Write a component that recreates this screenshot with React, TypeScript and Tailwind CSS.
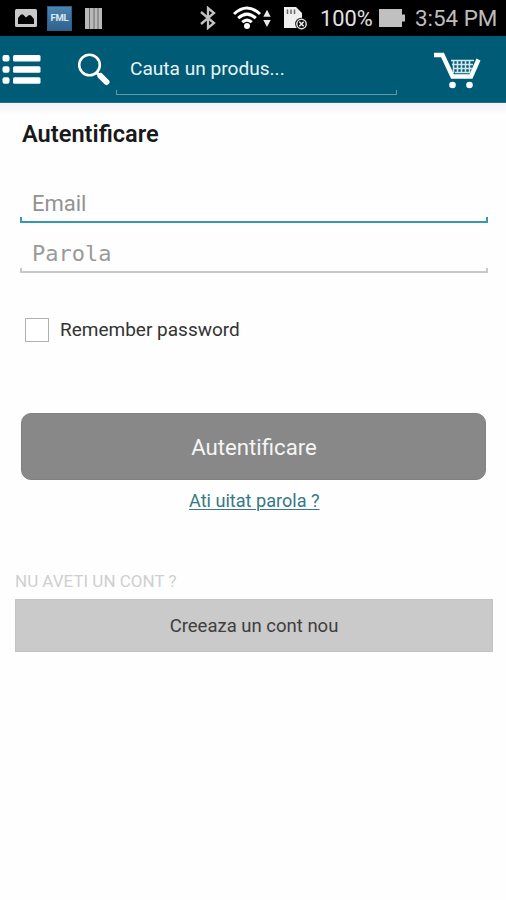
function StatusBar() {
  return (
    <div className="flex h-9 items-center bg-black pl-[15px] text-[22px] leading-9 text-[#bdbdbd]">
      <svg width="22" height="18" viewBox="0 0 22 18">
        <rect width="22" height="18" rx="1.5" fill="#c9c9c9" />
        <path d="M3 15V9L6 5.500H8L11 8.500L14 6L16 6.500L19 10V15Z" fill="#050505" />
      </svg>
      <div className="ml-[10px] flex h-[25px] w-[25px] items-center justify-center border border-[#2b618d] bg-linear-to-b from-[#4c83b1] to-[#2e638f] text-[9.500px] font-bold leading-none tracking-[-0.2px] text-[#dce9f3]">
        FML
      </div>
      <svg className="ml-[13px]" width="17" height="21" viewBox="0 0 17 21">
        <rect width="17" height="21" fill="#b9b9b9" />
        <path d="M4.5 0V21M9 0V21M13 0V21" stroke="#686868" strokeWidth="1" />
      </svg>
      <svg className="ml-[98px]" width="16" height="24" viewBox="0 0 16 24" fill="none" stroke="#c2c2c2" strokeWidth="2.3">
        <path d="M1 6L14 17L8 22V2L14 7L1 18" />
      </svg>
      <svg className="ml-[17px]" width="40" height="24" viewBox="0 0 40 24">
        <g fill="none" stroke="#fff" strokeWidth="3">
          <path d="M1 8Q14 -4 27 8" />
          <path d="M5.2 12.2Q14 4 22.8 12.2" />
          <path d="M9.2 16.2Q14 12 18.8 16.2" />
        </g>
        <circle cx="14" cy="20" r="3" fill="#fff" />
        <path d="M30.3 10.8L34 3.8L37.7 10.8ZM30.3 14L34 21L37.7 14Z" fill="#e8e8e8" />
      </svg>
      <svg className="ml-[10px]" width="25" height="24" viewBox="0 0 25 24">
        <path d="M1 1H13L19 7V22H1Z" fill="#efefef" />
        <path d="M4.500 3.500V8M8 3.500V8M11.500 3.500V8" stroke="#666" strokeWidth="1.5" />
        <circle cx="18.500" cy="18" r="6.3" fill="#080808" />
        <circle cx="18.500" cy="18" r="4.7" fill="none" stroke="#dedede" strokeWidth="1.5" />
        <path d="M16.300 15.8L20.700 20.2M20.700 15.8L16.300 20.2" stroke="#eee" strokeWidth="1.6" />
      </svg>
      <span className="ml-[12px] w-[58px] whitespace-nowrap pt-px text-[21.800px] text-[#e2e2e2]">100%</span>
      <svg width="28" height="20" viewBox="0 0 28 20">
        <path d="M1 1H24V6.500H27V13.500H24V19H1Z" fill="#c0c0c0" />
      </svg>
      <span className="ml-[9px] whitespace-nowrap text-[22.400px]">3:54 PM</span>
    </div>
  );
}

function Header() {
  return (
    <header className="flex h-[67px] items-start border-b border-[#23687c] bg-[#005b76]">
      <svg className="mt-[18px] ml-[2px]" width="39" height="31" viewBox="0 0 39 31" fill="#fff">
        <rect x="0.500" y="1" width="7" height="6.500" rx="2" />
        <rect x="11" y="1" width="27.500" height="6.500" rx="1.500" />
        <rect x="0.500" y="12.200" width="7" height="6.500" rx="2" />
        <rect x="11" y="12.200" width="27.500" height="6.500" rx="1.500" />
        <rect x="0.500" y="23.300" width="7" height="6.500" rx="2" />
        <rect x="11" y="23.300" width="27.500" height="6.500" rx="1.500" />
      </svg>
      <svg className="mt-[16px] ml-[37px]" width="33" height="34" viewBox="0 0 33 34" fill="none" stroke="#fff">
        <circle cx="11.500" cy="13" r="10.300" strokeWidth="2.600" />
        <path d="M18.500 20.500L22 24" strokeWidth="3" />
        <path d="M22.500 24L28.500 30" strokeWidth="6" strokeLinecap="round" />
      </svg>
      <div className="ml-[5px] flex h-[59px] w-[281px] flex-col justify-between">
        <span className="pt-[19px] pl-[14px] text-[19.100px] leading-7 text-[#e9f3f5]">Cauta un produs...</span>
        <span className="h-[5px] border border-t-0 border-[#5a9bae]" />
      </div>
      <svg className="mt-[15px] ml-[37px]" width="50" height="39" viewBox="0 0 50 39">
        <path d="M17 9.500H40M18 13.500H39M19 17.500H38M21 21.500H36M19.500 9V22M23.500 9V22M27.500 9V22M31.500 9V22M35.500 9V22" stroke="#d2e6eb" strokeWidth="1.600" fill="none" />
        <path d="M0 4H8.500L18.500 25.500H37L44.500 8.500" fill="none" stroke="#fff" strokeWidth="4.400" />
        <circle cx="18.500" cy="34" r="3.300" fill="#fff" />
        <circle cx="35.500" cy="34" r="3.300" fill="#fff" />
      </svg>
    </header>
  );
}

export default function App() {
  return (
    <div className="h-[900px] w-[506px] overflow-hidden bg-[#fefefe] font-[Roboto,sans-serif]">
      <StatusBar />
      <Header />
      <main className="h-[797px] bg-linear-to-b from-[#f3f3f8] to-[#fefefe] to-[12px]">
        <form className="flex flex-col px-[20px]">
          <h1 className="mt-[16px] ml-[2px] h-[30px] text-[23.600px] font-semibold leading-[30px] text-[#191919]">Autentificare</h1>
          <div className="mt-[40px] h-[28px] pl-[12px] text-[22px] leading-[30px] text-[#929292]">Email</div>
          <div className="h-[6px] w-[468px] border-2 border-t-0 border-[#359aa9]" />
          <div className="mt-[16px] h-[29px] pl-[12px] font-['DejaVu_Sans_Mono',monospace] text-[22px] leading-[30px] text-[#9a9a9a]">Parola</div>
          <div className="h-[5px] w-[468px] border-2 border-t-0 border-[#c8c8c8]" />
          <label className="mt-[45px] flex h-[24px] items-center pl-[5px] text-[19px] leading-6 text-[#333]">
            <span className="mr-[11px] h-[24px] w-[24px] border-[1.500px] border-[#b0b0b0] bg-white" />
            <span>Remember password</span>
          </label>
          <button type="button" className="mt-[71px] ml-[1px] h-[67px] w-[465px] rounded-[10px] border border-[#808080] bg-[#888] pl-px text-[22.200px] leading-8 text-[#f5f5f5]">Autentificare</button>
          <a className="mt-[7px] ml-[169px] h-[28px] self-start whitespace-nowrap text-[18.100px] leading-7 text-[#347984] underline decoration-1 underline-offset-2">Ati uitat parola ?</a>
        </form>
        <section className="ml-[15px] pt-[54px]">
          <h2 className="h-[24px] text-[17px] leading-6 text-[#cfcfcf]">NU AVETI UN CONT ?</h2>
          <button type="button" className="mt-[6px] h-[53px] w-[478px] border border-[#c3c3c3] bg-[#cacaca] pt-px text-[18.500px] leading-7 text-[#3e3e3e]">Creeaza un cont nou</button>
        </section>
      </main>
    </div>
  );
}
